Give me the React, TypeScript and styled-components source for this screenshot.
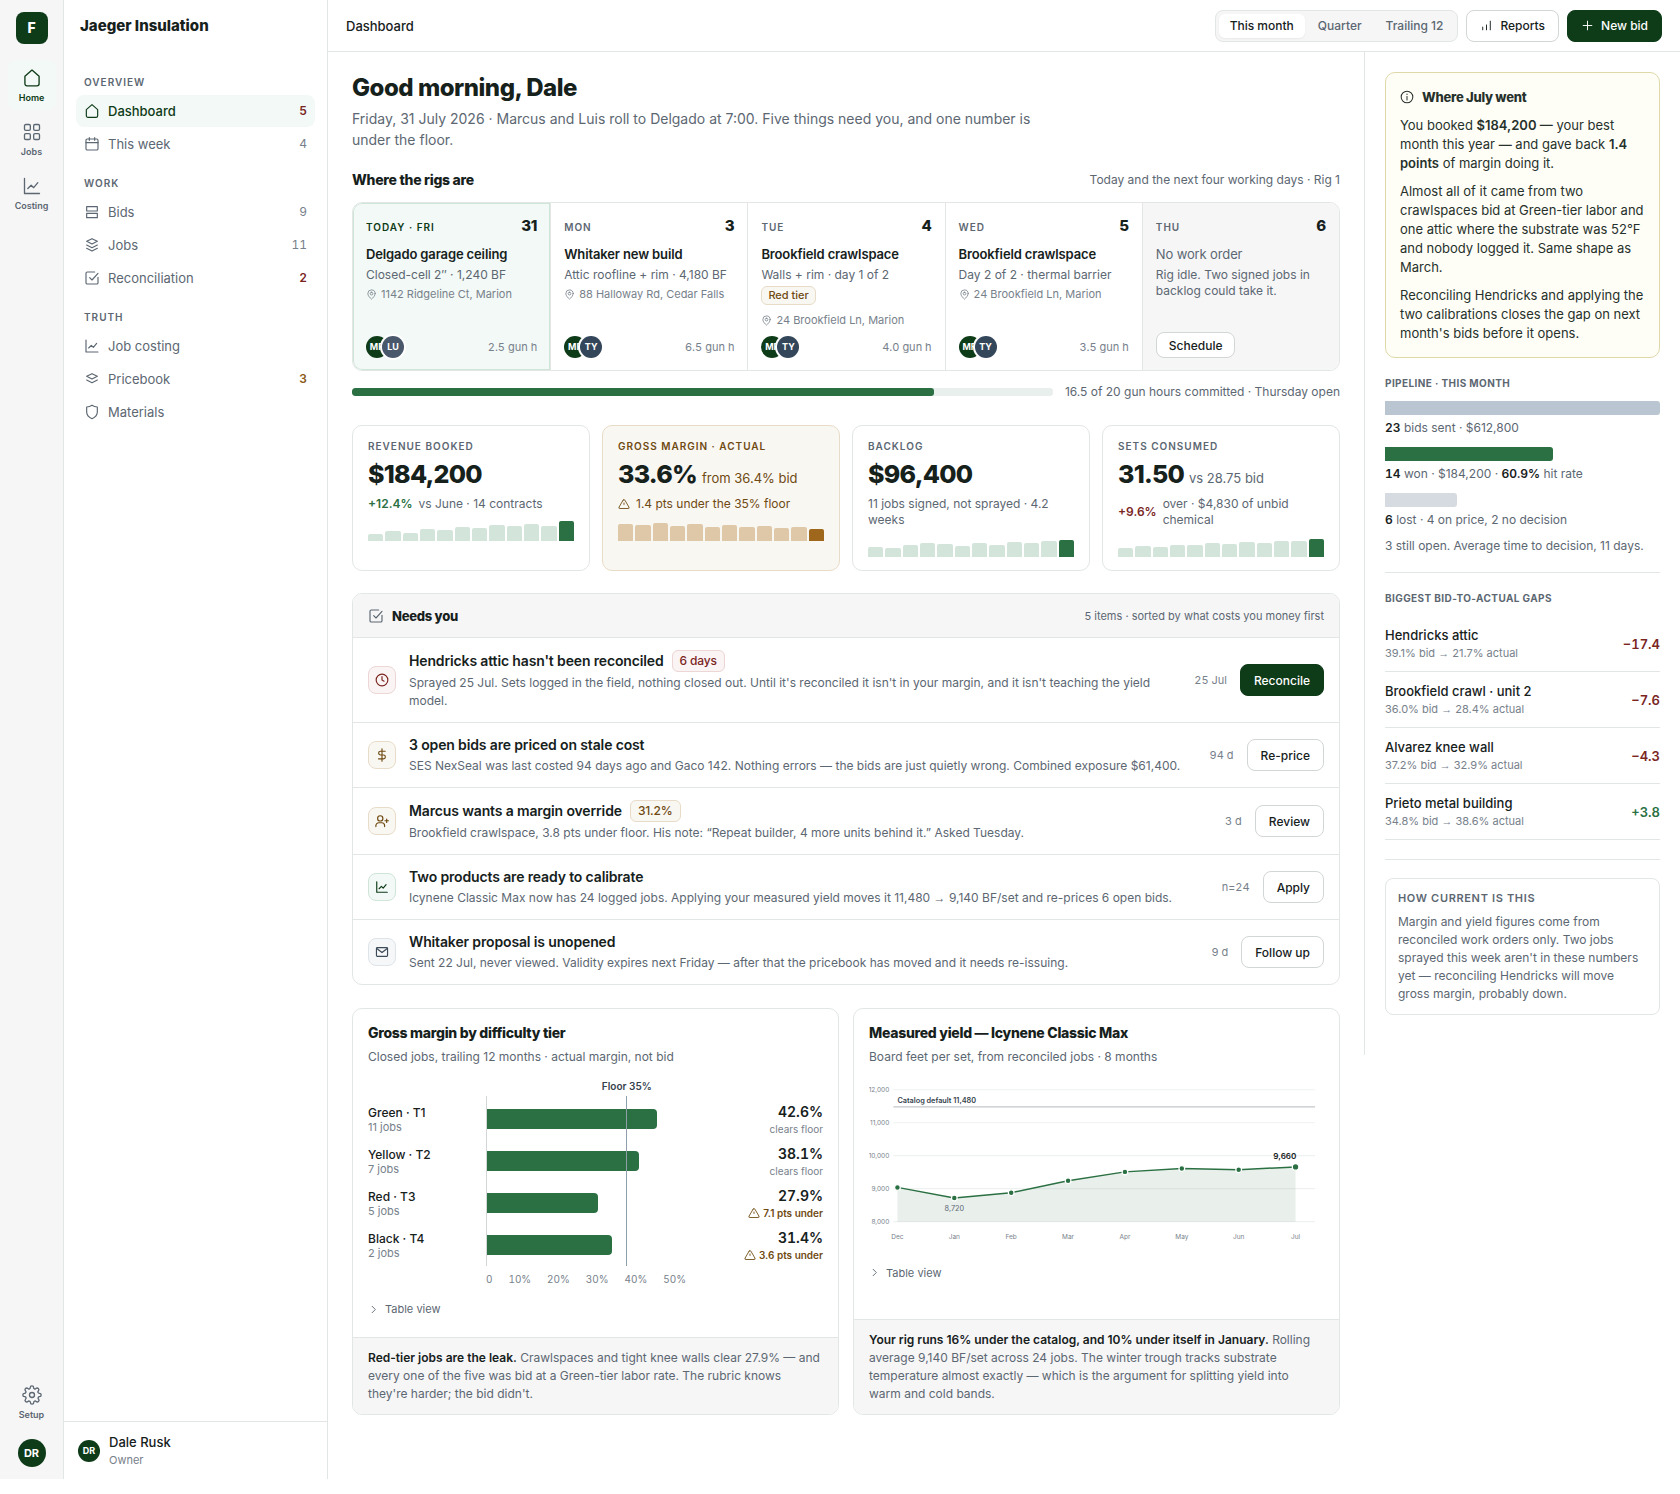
import React, { useState } from "react";
import styled, { createGlobalStyle, css } from "styled-components";

const c = {
  ink: "#16211c",
  text: "#5c6772",
  faint: "#77818b",
  line: "#e2e6e5",
  strong: "#d2d6d6",
  wash: "#f6f6f7",
  brand: "#0e3b18",
  green: "#2a7042",
  greenWash: "#f3f9f6",
  greenLine: "#cfe5d8",
  greenSoft: "#d3e5db",
  amber: "#6f4a12",
  amberWash: "#f9f7f2",
  amberLine: "#e8dcc8",
  red: "#7a261f",
  redWash: "#faf4f4",
  redLine: "#ecd6d6",
};

const Global = createGlobalStyle`
  *, *::before, *::after { box-sizing: border-box; }
  body {
    margin: 0;
    background: #fff;
    color: ${c.ink};
    font-family: Inter, "Liberation Sans", sans-serif;
    font-size: 13px;
    line-height: 20px;
  }
  h1, h2, h3, p, ul, ol { margin: 0; padding: 0; }
  ul, ol { list-style: none; }
  a { color: inherit; text-decoration: none; }
  button { font-family: inherit; cursor: pointer; }
`;

/* ---------- icons ---------- */

const paths = {
  home: ["M3.5 10 12 2.5 20.5 10V19a2.5 2.5 0 0 1-2.5 2.5H6A2.5 2.5 0 0 1 3.5 19z"],
  grid: [
    "M4.5 3h4A1.5 1.5 0 0 1 10 4.5v4A1.5 1.5 0 0 1 8.5 10h-4A1.5 1.5 0 0 1 3 8.5v-4A1.5 1.5 0 0 1 4.5 3z",
    "M15.5 3h4A1.5 1.5 0 0 1 21 4.5v4a1.5 1.5 0 0 1-1.5 1.5h-4A1.5 1.5 0 0 1 14 8.5v-4A1.5 1.5 0 0 1 15.5 3z",
    "M4.5 14h4a1.5 1.5 0 0 1 1.5 1.5v4A1.5 1.5 0 0 1 8.5 21h-4A1.5 1.5 0 0 1 3 19.5v-4A1.5 1.5 0 0 1 4.5 14z",
    "M15.5 14h4a1.5 1.5 0 0 1 1.5 1.5v4a1.5 1.5 0 0 1-1.5 1.5h-4a1.5 1.5 0 0 1-1.5-1.5v-4a1.5 1.5 0 0 1 1.5-1.5z",
  ],
  chart: ["M3 3v18h18", "m7 15 4-4 3 3 5-6"],
  calendar: ["M5 4.5h14a2 2 0 0 1 2 2V19a2 2 0 0 1-2 2H5a2 2 0 0 1-2-2V6.5a2 2 0 0 1 2-2z", "M3 10h18", "M8 2.5v4", "M16 2.5v4"],
  rows: ["M4 4h16v6.5H4z", "M4 14h16v6.5H4z"],
  layers: ["m12 2.5 8 4-8 4-8-4z", "m4 12 8 4 8-4", "m4 17 8 4 8-4"],
  book: ["m12 4 8 4-8 4-8-4z", "m4 13.5 8 4 8-4"],
  check: ["M21 11v8a2 2 0 0 1-2 2H5a2 2 0 0 1-2-2V5a2 2 0 0 1 2-2h11", "m8.5 11.5 3.5 3.5L21 5"],
  shield: ["M12 2c2.5 1.8 5 2.5 8 2.5V12c0 5-3.5 8-8 10-4.5-2-8-5-8-10V4.5C7 4.5 9.5 3.8 12 2z"],
  bars: ["M5 20v-5", "M12 20v-9", "M19 20V4"],
  plus: ["M12 4v16", "M4 12h16"],
  info: ["M12 2a10 10 0 1 0 0 20 10 10 0 0 0 0-20z", "M12 11v6", "M12 7v.5"],
  pin: ["M20 10c0 5-5 9.5-8 12-3-2.5-8-7-8-12a8 8 0 0 1 16 0z", "M12 7a3 3 0 1 0 0 6 3 3 0 0 0 0-6z"],
  warn: ["M10.3 4.2 2.2 18a2 2 0 0 0 1.7 3h16.2a2 2 0 0 0 1.7-3L13.7 4.2a2 2 0 0 0-3.4 0z", "M12 10v3"],
  clock: ["M12 2a10 10 0 1 0 0 20 10 10 0 0 0 0-20z", "M12 6v6l3.5 2"],
  dollar: ["M12 1.5v21", "M17.5 5.5H9.5a3.25 3.25 0 0 0 0 6.5h5a3.25 3.25 0 0 1 0 6.5H6"],
  user: ["M9 3a4.5 4.5 0 1 0 0 9 4.5 4.5 0 0 0 0-9z", "M1.5 21.5v-1.5a5 5 0 0 1 5-5h5a5 5 0 0 1 5 5v1.5", "M20 8.5v6", "M17 11.5h6"],
  mail: ["M4 4.5h16a1.5 1.5 0 0 1 1.5 1.5v12a1.5 1.5 0 0 1-1.5 1.5H4A1.5 1.5 0 0 1 2.5 18V6A1.5 1.5 0 0 1 4 4.5z", "m3 6 9 7 9-7"],
  chevron: ["m9 5 7 7-7 7"],
  gear: [
    "M19.4 15a1.65 1.65 0 0 0 .33 1.82l.06.06a2 2 0 0 1-2.83 2.83l-.06-.06a1.65 1.65 0 0 0-2.8 1.18V21a2 2 0 0 1-4 0v-.09A1.65 1.65 0 0 0 9 19.4a1.65 1.65 0 0 0-1.82.33l-.06.06a2 2 0 0 1-2.83-2.83l.06-.06A1.65 1.65 0 0 0 3.09 14H3a2 2 0 0 1 0-4h.09A1.65 1.65 0 0 0 4.6 9a1.65 1.65 0 0 0-.33-1.82l-.06-.06a2 2 0 0 1 2.83-2.83l.06.06A1.65 1.65 0 0 0 9.9 3.09V3a2 2 0 0 1 4 0v.09a1.65 1.65 0 0 0 2.8 1.26l.06-.06a2 2 0 0 1 2.83 2.83l-.06.06A1.65 1.65 0 0 0 20.91 10H21a2 2 0 0 1 0 4h-.09a1.65 1.65 0 0 0-1.51 1z",
    "M12 9a3 3 0 1 0 0 6 3 3 0 0 0 0-6z",
  ],
};
type IconName = keyof typeof paths;

const Svg = styled.svg`
  flex: none;
  display: block;
  fill: none;
  stroke: currentColor;
  stroke-linecap: round;
  stroke-linejoin: round;
`;

function Icon({ name, size = 16, weight = 1.75 }: { name: IconName; size?: number; weight?: number }) {
  return (
    <Svg width={size} height={size} viewBox="0 0 24 24" strokeWidth={weight} aria-hidden="true">
      {paths[name].map((d) => (
        <path key={d} d={d} />
      ))}
    </Svg>
  );
}

/* ---------- shell ---------- */

const Shell = styled.div`
  display: grid;
  grid-template-columns: 64px 264px minmax(0, 1fr);
`;

const Rail = styled.nav`
  display: flex;
  flex-direction: column;
  align-items: center;
  gap: 4px;
  padding: 12px 0;
  background: ${c.wash};
  border-right: 1px solid ${c.line};
`;

const Logo = styled.a`
  display: grid;
  place-items: center;
  width: 32px;
  height: 32px;
  margin-bottom: 12px;
  border-radius: 8px;
  background: ${c.brand};
  color: #fff;
  font-size: 14px;
  font-weight: 800;
`;

const RailLink = styled.a<{ $active?: boolean }>`
  display: flex;
  flex-direction: column;
  align-items: center;
  gap: 4px;
  width: 48px;
  height: 50px;
  padding-top: 8px;
  border-radius: 8px;
  font-size: 9px;
  font-weight: 600;
  line-height: 12px;
  color: ${(p) => (p.$active ? c.brand : c.text)};
  background: ${(p) => (p.$active ? c.greenWash : "transparent")};
`;

const RailFoot = styled.div`
  display: flex;
  flex-direction: column;
  align-items: center;
  gap: 12px;
  margin-top: auto;
`;

const Avatar = styled.span<{ $size: number; $color?: string; $ring?: boolean }>`
  flex: none;
  display: grid;
  place-items: center;
  width: ${(p) => p.$size}px;
  height: ${(p) => p.$size}px;
  border-radius: 50%;
  background: ${(p) => p.$color ?? c.brand};
  color: #fff;
  font-size: ${(p) => (p.$size > 24 ? 11 : 9)}px;
  font-weight: 700;
  line-height: 12px;
  box-shadow: ${(p) => (p.$ring ? "0 0 0 2px #fff" : "none")};
`;

const Sidebar = styled.div`
  display: flex;
  flex-direction: column;
  border-right: 1px solid ${c.line};
`;

const Company = styled.div`
  padding: 16px;
  font-size: 15px;
  font-weight: 800;
  line-height: 20px;
`;

const Groups = styled.nav`
  display: grid;
  gap: 15px;
  padding: 22px 12px;
`;

const GroupLabel = styled.h2`
  padding-left: 8px;
  margin-bottom: 5px;
  font-size: 10px;
  font-weight: 600;
  line-height: 16px;
  letter-spacing: 1px;
  color: ${c.text};
`;

const NavList = styled.ul`
  display: grid;
  gap: 1px;
`;

const NavLink = styled.a<{ $active?: boolean }>`
  display: flex;
  align-items: center;
  gap: 8px;
  height: 32px;
  padding: 0 8px;
  border-radius: 8px;
  font-size: 13px;
  font-weight: ${(p) => (p.$active ? 500 : 400)};
  color: ${(p) => (p.$active ? c.brand : c.text)};
  background: ${(p) => (p.$active ? c.greenWash : "transparent")};
`;

const Count = styled.span<{ $tone?: string }>`
  margin-left: auto;
  font-size: 12px;
  font-weight: ${(p) => (p.$tone ? 600 : 400)};
  font-variant-numeric: tabular-nums;
  color: ${(p) => p.$tone ?? c.faint};
`;

const Account = styled.div`
  display: flex;
  align-items: center;
  gap: 9px;
  height: 58px;
  margin-top: auto;
  padding: 0 14px;
  border-top: 1px solid ${c.line};
  font-weight: 500;
  line-height: 18px;
`;

const Muted = styled.div`
  font-size: 11px;
  font-weight: 400;
  line-height: 18px;
  color: ${c.faint};
`;

const Page = styled.div`
  min-width: 0;
`;

const Topbar = styled.header`
  display: flex;
  align-items: center;
  gap: 8px;
  height: 52px;
  padding: 0 18px;
  border-bottom: 1px solid ${c.line};
`;

const Crumb = styled.div`
  margin-right: auto;
  font-weight: 500;
`;

const Tabs = styled.div`
  display: flex;
  gap: 2px;
  padding: 3px;
  border: 1px solid ${c.line};
  border-radius: 8px;
  background: ${c.wash};
`;

const Tab = styled.button<{ $active?: boolean }>`
  height: 24px;
  padding: 0 11px;
  border: 0;
  border-radius: 6px;
  font-size: 12px;
  font-weight: 500;
  color: ${(p) => (p.$active ? c.ink : c.text)};
  background: ${(p) => (p.$active ? "#fff" : "transparent")};
  box-shadow: ${(p) => (p.$active ? "0 1px 2px rgba(20, 30, 25, 0.06)" : "none")};
`;

const Button = styled.button<{ $primary?: boolean; $small?: boolean }>`
  flex: none;
  display: inline-flex;
  align-items: center;
  gap: 7px;
  height: ${(p) => (p.$small ? 26 : 32)}px;
  padding: 0 ${(p) => (p.$small ? 12 : 13)}px;
  border: 1px solid ${(p) => (p.$primary ? c.brand : c.strong)};
  border-radius: 8px;
  font-size: 12px;
  font-weight: 500;
  white-space: nowrap;
  color: ${(p) => (p.$primary ? "#fff" : c.ink)};
  background: ${(p) => (p.$primary ? c.brand : "#fff")};
`;

const Columns = styled.div`
  display: grid;
  grid-template-columns: minmax(0, 1fr) 316px;
  align-items: start;
`;

const Main = styled.main`
  padding: 20px 24px 64px;
`;

const Greeting = styled.h1`
  font-size: 24px;
  font-weight: 800;
  line-height: 32px;
  letter-spacing: -0.02em;
`;

const Lede = styled.p`
  max-width: 690px;
  margin: 4px 0 20px;
  font-size: 14px;
  line-height: 21px;
  color: ${c.text};
`;

const SectionHead = styled.div`
  display: flex;
  align-items: center;
  justify-content: space-between;
  margin-bottom: 12px;
`;

const Heading = styled.h2<{ $small?: boolean }>`
  font-size: ${(p) => (p.$small ? 13 : 14)}px;
  font-weight: 800;
  line-height: 20px;
  letter-spacing: -0.02em;
`;

const Note = styled.span<{ $small?: boolean }>`
  font-size: ${(p) => (p.$small ? 11 : 12)}px;
  line-height: 18px;
  color: ${c.text};
`;

/* ---------- week ---------- */

const Week = styled.ol`
  display: grid;
  grid-template-columns: repeat(5, minmax(0, 1fr));
  min-height: 169px;
  border: 1px solid ${c.line};
  border-radius: 10px;
  overflow: hidden;
`;

const Day = styled.li<{ $today?: boolean; $idle?: boolean }>`
  display: flex;
  flex-direction: column;
  padding: 13px 13px 12px;
  background: ${(p) => (p.$today ? c.greenWash : p.$idle ? c.wash : "#fff")};
  & + & {
    border-left: 1px solid ${c.line};
  }
  ${(p) =>
    p.$today &&
    css`
      box-shadow: inset 0 0 0 1px ${c.greenLine};
      border-radius: 9px 0 0 9px;
    `}
`;

const DayHead = styled.div`
  display: flex;
  align-items: baseline;
  justify-content: space-between;
  margin-bottom: 7px;
`;

const DayName = styled.span<{ $today?: boolean }>`
  font-size: 10px;
  font-weight: 600;
  line-height: 20px;
  letter-spacing: 1px;
  color: ${(p) => (p.$today ? c.brand : c.text)};
`;

const DayNumber = styled.span`
  font-size: 15px;
  font-weight: 800;
  line-height: 20px;
  letter-spacing: -0.02em;
`;

const JobTitle = styled.div<{ $muted?: boolean }>`
  font-size: 13px;
  font-weight: ${(p) => (p.$muted ? 400 : 600)};
  color: ${(p) => (p.$muted ? c.text : c.ink)};
  line-height: 20px;
  letter-spacing: -0.01em;
  white-space: nowrap;
`;

const JobLine = styled.div<{ $faint?: boolean }>`
  display: flex;
  align-items: center;
  gap: 4px;
  margin-top: 3px;
  font-size: ${(p) => (p.$faint ? 11 : 12)}px;
  line-height: 16px;
  color: ${(p) => (p.$faint ? c.faint : c.text)};
`;

const tones = {
  red: [c.red, c.redWash, c.redLine],
  amber: [c.amber, c.amberWash, c.amberLine],
  green: [c.brand, c.greenWash, c.greenLine],
  slate: ["#3d4a57", "#f5f7f9", "#dfe4e8"],
} as const;
type Tone = keyof typeof tones;

const Badge = styled.span<{ $tone: Tone; $small?: boolean }>`
  display: inline-block;
  padding: ${(p) => (p.$small ? "0 6px" : "1px 7px")};
  border: 1px solid ${(p) => tones[p.$tone][2]};
  border-radius: 6px;
  font-size: ${(p) => (p.$small ? 11 : 12)}px;
  font-weight: 500;
  line-height: ${(p) => (p.$small ? 17 : 18)}px;
  color: ${(p) => tones[p.$tone][0]};
  background: ${(p) => tones[p.$tone][1]};
`;

const BadgeLine = styled.div`
  display: flex;
  margin: 3px 0 4px;
`;

const DayFoot = styled.div`
  display: flex;
  align-items: center;
  justify-content: space-between;
  margin-top: auto;
`;

const Crew = styled.div`
  display: flex;
  & > * + * {
    margin-left: -6px;
  }
`;

const Hours = styled.span`
  font-size: 11px;
  line-height: 16px;
  font-variant-numeric: tabular-nums;
  color: ${c.faint};
`;

const Capacity = styled.div`
  display: flex;
  align-items: center;
  gap: 12px;
  margin: 12px 0 24px;
`;

const Meter = styled.div`
  flex: 1;
  height: 8px;
  border-radius: 3px;
  background: #e9efec;
  overflow: hidden;
`;

const MeterFill = styled.div`
  height: 100%;
  border-radius: 3px;
  background: ${c.green};
`;

/* ---------- stats ---------- */

const Stats = styled.div`
  display: grid;
  grid-template-columns: repeat(4, minmax(0, 1fr));
  gap: 12px;
  margin-bottom: 22px;
`;

const Stat = styled.section<{ $warn?: boolean }>`
  padding: 13px 15px;
  border: 1px solid ${(p) => (p.$warn ? c.amberLine : c.line)};
  border-radius: 10px;
  background: ${(p) => (p.$warn ? c.amberWash : "#fff")};
  color: ${(p) => (p.$warn ? c.amber : c.text)};
`;

const StatLabel = styled.h3`
  font-size: 10px;
  font-weight: 600;
  line-height: 14px;
  letter-spacing: 1px;
`;

const StatValue = styled.div`
  display: flex;
  align-items: baseline;
  gap: 5px;
  height: 30px;
  margin-top: 6px;
  font-size: 13px;
  line-height: 20px;
  white-space: nowrap;
`;

const Big = styled.strong`
  font-size: 25px;
  font-weight: 800;
  line-height: 30px;
  letter-spacing: -0.03em;
  color: ${c.ink};
`;

const StatSub = styled.div`
  display: flex;
  align-items: center;
  gap: 6px;
  margin-top: 7px;
  font-size: 12px;
  line-height: 16px;
`;

const Delta = styled.b<{ $bad?: boolean }>`
  font-weight: 600;
  color: ${(p) => (p.$bad ? c.red : c.green)};
`;

const Spark = styled.div`
  display: flex;
  align-items: flex-end;
  gap: 2px;
  height: 22px;
  margin-top: 7px;
`;

const SparkBar = styled.span<{ $warn?: boolean }>`
  flex: 1;
  border-radius: 2px 2px 0 0;
  background: ${(p) => (p.$warn ? "#dfc8a8" : c.greenSoft)};
  &:last-child {
    background: ${(p) => (p.$warn ? "#9f671b" : c.green)};
  }
`;

function Sparkline({ values, warn }: { values: number[]; warn?: boolean }) {
  return (
    <Spark aria-hidden="true">
      {values.map((v, i) => (
        <SparkBar key={i} $warn={warn} style={{ height: v }} />
      ))}
    </Spark>
  );
}

/* ---------- queue ---------- */

const Panel = styled.section`
  display: flex;
  flex-direction: column;
  border: 1px solid ${c.line};
  border-radius: 10px;
  overflow: hidden;
`;

const PanelHead = styled.header`
  display: flex;
  align-items: center;
  justify-content: space-between;
  height: 44px;
  padding: 0 15px;
  border-bottom: 1px solid ${c.line};
  background: ${c.wash};
`;

const IconHeading = styled.div`
  display: flex;
  align-items: center;
  gap: 8px;
  color: ${c.text};
  h2 {
    color: ${c.ink};
  }
`;

const Task = styled.li`
  display: flex;
  align-items: center;
  gap: 13px;
  padding: 12px 15px;
  & + & {
    border-top: 1px solid ${c.line};
  }
`;

const Tile = styled.span<{ $tone: Tone }>`
  flex: none;
  display: grid;
  place-items: center;
  width: 28px;
  height: 28px;
  border: 1px solid ${(p) => tones[p.$tone][2]};
  border-radius: 8px;
  color: ${(p) => tones[p.$tone][0]};
  background: ${(p) => tones[p.$tone][1]};
`;

const TaskBody = styled.div`
  flex: 1;
  min-width: 0;
`;

const TaskTitle = styled.h3`
  display: flex;
  align-items: center;
  gap: 8px;
  font-size: 14px;
  font-weight: 600;
  line-height: 20px;
  letter-spacing: -0.01em;
`;

const TaskText = styled.p`
  max-width: 780px;
  margin-top: 2px;
  font-size: 12px;
  line-height: 18px;
  color: ${c.text};
`;

const ArrowGlyph = styled.span`
  font-family: "Liberation Sans", sans-serif;
`;

/* ---------- charts ---------- */

const Charts = styled.div`
  display: grid;
  grid-template-columns: repeat(2, minmax(0, 1fr));
  gap: 14px;
  margin-top: 23px;
`;

const ChartBody = styled.div`
  padding: 14px 15px 19px;
`;

const ChartSub = styled.p`
  margin-top: 5px;
  font-size: 12px;
  line-height: 18px;
  color: ${c.text};
`;

const Tiers = styled.div`
  display: grid;
  grid-template-columns: 118px minmax(0, 200px) minmax(0, 1fr);
  margin-top: 30px;
`;

const TierColumn = styled.div`
  padding-top: 2px;
`;

const TierCell = styled.div<{ $right?: boolean }>`
  display: flex;
  flex-direction: column;
  justify-content: center;
  height: 42px;
  align-items: ${(p) => (p.$right ? "flex-end" : "flex-start")};
`;

const TierName = styled.span`
  font-size: 12px;
  font-weight: 500;
  line-height: 15px;
`;

const TierJobs = styled.span`
  font-size: 11px;
  line-height: 14px;
  color: ${c.faint};
`;

const TierValue = styled.span`
  padding-top: 2px;
  font-size: 14px;
  font-weight: 600;
  line-height: 18px;
  font-variant-numeric: tabular-nums;
`;

const TierNote = styled.span<{ $warn?: boolean }>`
  display: flex;
  align-items: center;
  gap: 3px;
  font-size: 10px;
  font-weight: ${(p) => (p.$warn ? 600 : 400)};
  line-height: 16px;
  color: ${(p) => (p.$warn ? c.amber : c.faint)};
`;

const Plot = styled(TierColumn)`
  position: relative;
  border-left: 1px solid ${c.strong};
`;

const TierBar = styled.div`
  height: 20px;
  border-radius: 0 4px 4px 0;
  background: ${c.green};
`;

const Floor = styled.div`
  position: absolute;
  top: 0;
  bottom: 0;
  left: 70%;
  width: 1px;
  background: #8fa0ab;
`;

const FloorLabel = styled.span`
  position: absolute;
  bottom: 100%;
  left: 50%;
  transform: translateX(-50%);
  margin-bottom: 3px;
  font-size: 10px;
  font-weight: 600;
  line-height: 14px;
  white-space: nowrap;
  color: #35424d;
`;

const Axis = styled.div`
  grid-column: 2;
  display: flex;
  justify-content: space-between;
  margin-top: 6px;
  font-size: 10px;
  line-height: 14px;
  font-variant-numeric: tabular-nums;
  color: ${c.faint};
`;

const Details = styled.details<{ $gap: number }>`
  margin-top: ${(p) => p.$gap}px;
  font-size: 11px;
  color: ${c.text};
  &[open] > summary > svg {
    transform: rotate(90deg);
  }
`;

const Summary = styled.summary`
  display: flex;
  align-items: center;
  gap: 6px;
  list-style: none;
  line-height: 18px;
  cursor: pointer;
`;

const DataTable = styled.table`
  width: 100%;
  margin-top: 8px;
  border-collapse: collapse;
  text-align: left;
  th,
  td {
    padding: 4px 0;
    border-bottom: 1px solid ${c.line};
  }
`;

const ChartFoot = styled.p`
  margin-top: auto;
  padding: 11px 17px 11px 15px;
  border-top: 1px solid ${c.line};
  background: ${c.wash};
  font-size: 12px;
  line-height: 18px;
  color: ${c.text};
  b {
    font-weight: 600;
    color: ${c.ink};
  }
`;

const YieldSvg = styled.svg`
  display: block;
  width: 100%;
  margin-top: 14px;
  overflow: hidden;
  font-size: 8px;
  fill: ${c.faint};
`;

/* ---------- aside ---------- */

const Aside = styled.aside`
  padding: 20px 20px 40px;
  border-left: 1px solid ${c.line};
`;

const Callout = styled.section`
  display: grid;
  gap: 9px;
  padding: 14px;
  border: 1px solid #dfd8a9;
  border-radius: 10px;
  background: #fffef6;
  font-size: 13px;
  line-height: 19px;
  color: #26312c;
  b {
    font-weight: 600;
  }
`;

const CalloutHead = styled.div`
  display: flex;
  align-items: center;
  gap: 8px;
`;

const SideLabel = styled.h2<{ $spaced?: boolean }>`
  font-size: ${(p) => (p.$spaced ? 11 : 10)}px;
  font-weight: ${(p) => (p.$spaced ? 600 : 700)};
  line-height: 16px;
  letter-spacing: ${(p) => (p.$spaced ? "0.06em" : "0.04em")};
  color: ${c.text};
`;

const Pipeline = styled.section`
  padding: 17px 0 17px;
  border-bottom: 1px solid ${c.line};
`;

const Stage = styled.div`
  margin-top: 10px;
  font-size: 12px;
  line-height: 18px;
  color: ${c.text};
  b {
    font-weight: 600;
    color: ${c.ink};
    font-variant-numeric: tabular-nums;
  }
`;

const StageNote = styled.p`
  margin-top: 8px;
  font-size: 12px;
  line-height: 18px;
  color: ${c.text};
`;

const StageBar = styled.div<{ $color: string }>`
  height: 14px;
  margin-bottom: 4px;
  border-radius: 0 3px 3px 0;
  background: ${(p) => p.$color};
`;

const Gaps = styled.section`
  padding: 17px 0 19px;
  border-bottom: 1px solid ${c.line};
  ul {
    margin-top: 10px;
  }
`;

const Gap = styled.li`
  display: flex;
  align-items: center;
  justify-content: space-between;
  height: 56px;
  border-bottom: 1px solid ${c.line};
`;

const GapName = styled.div`
  font-size: 13px;
  font-weight: 500;
  line-height: 19px;
`;

const GapText = styled.div`
  font-size: 11px;
  line-height: 17px;
  color: ${c.faint};
`;

const GapValue = styled.b<{ $good?: boolean }>`
  font-size: 13px;
  font-weight: 600;
  font-variant-numeric: tabular-nums;
  color: ${(p) => (p.$good ? c.green : c.red)};
`;

const Freshness = styled.section`
  margin-top: 18px;
  padding: 11px 12px;
  border: 1px solid ${c.line};
  border-radius: 8px;
  p {
    margin-top: 7px;
    font-size: 12px;
    line-height: 18px;
    color: ${c.text};
  }
`;

/* ---------- data ---------- */

type Item = { icon: IconName; label: string; count?: number; tone?: string; active?: boolean };
const groups: { label: string; items: Item[] }[] = [
  {
    label: "OVERVIEW",
    items: [
      { icon: "home", label: "Dashboard", count: 5, tone: c.red, active: true },
      { icon: "calendar", label: "This week", count: 4 },
    ],
  },
  {
    label: "WORK",
    items: [
      { icon: "rows", label: "Bids", count: 9 },
      { icon: "layers", label: "Jobs", count: 11 },
      { icon: "check", label: "Reconciliation", count: 2, tone: c.red },
    ],
  },
  {
    label: "TRUTH",
    items: [
      { icon: "chart", label: "Job costing" },
      { icon: "book", label: "Pricebook", count: 3, tone: "#8a5a18" },
      { icon: "shield", label: "Materials" },
    ],
  },
];

const days = [
  { day: "TODAY · FRI", n: 31, job: "Delgado garage ceiling", what: "Closed-cell 2″ · 1,240 BF", where: "1142 Ridgeline Ct, Marion", mate: "LU", hours: "2.5", today: true },
  { day: "MON", n: 3, job: "Whitaker new build", what: "Attic roofline + rim · 4,180 BF", where: "88 Halloway Rd, Cedar Falls", mate: "TY", hours: "6.5" },
  { day: "TUE", n: 4, job: "Brookfield crawlspace", what: "Walls + rim · day 1 of 2", tier: "Red tier", where: "24 Brookfield Ln, Marion", mate: "TY", hours: "4.0" },
  { day: "WED", n: 5, job: "Brookfield crawlspace", what: "Day 2 of 2 · thermal barrier", where: "24 Brookfield Ln, Marion", mate: "TY", hours: "3.5" },
];

type TaskData = { icon: IconName; tone: Tone; title: string; badge?: string; text: React.ReactNode; when: string; action: string; primary?: boolean };
const tasks: TaskData[] = [
  { icon: "clock", tone: "red", title: "Hendricks attic hasn't been reconciled", badge: "6 days", text: "Sprayed 25 Jul. Sets logged in the field, nothing closed out. Until it's reconciled it isn't in your margin, and it isn't teaching the yield model.", when: "25 Jul", action: "Reconcile", primary: true },
  { icon: "dollar", tone: "amber", title: "3 open bids are priced on stale cost", text: "SES NexSeal was last costed 94 days ago and Gaco 142. Nothing errors — the bids are just quietly wrong. Combined exposure $61,400.", when: "94 d", action: "Re-price" },
  { icon: "user", tone: "amber", title: "Marcus wants a margin override", badge: "31.2%", text: "Brookfield crawlspace, 3.8 pts under floor. His note: “Repeat builder, 4 more units behind it.” Asked Tuesday.", when: "3 d", action: "Review" },
  { icon: "chart", tone: "green", title: "Two products are ready to calibrate", text: <>Icynene Classic Max now has 24 logged jobs. Applying your measured yield moves it 11,480 <ArrowGlyph>→</ArrowGlyph> 9,140 BF/set and re-prices 6 open bids.</>, when: "n=24", action: "Apply" },
  { icon: "mail", tone: "slate", title: "Whitaker proposal is unopened", text: "Sent 22 Jul, never viewed. Validity expires next Friday — after that the pricebook has moved and it needs re-issuing.", when: "9 d", action: "Follow up" },
];

const tiers = [
  { name: "Green · T1", jobs: 11, margin: 42.6 },
  { name: "Yellow · T2", jobs: 7, margin: 38.1 },
  { name: "Red · T3", jobs: 5, margin: 27.9 },
  { name: "Black · T4", jobs: 2, margin: 31.4 },
];
const FLOOR = 35;

const yields: [string, number][] = [
  ["Dec", 9040], ["Jan", 8720], ["Feb", 8880], ["Mar", 9240],
  ["Apr", 9510], ["May", 9615], ["Jun", 9575], ["Jul", 9660],
];

const gaps = [
  { name: "Hendricks attic", bid: "39.1", actual: "21.7", gap: "−17.4" },
  { name: "Brookfield crawl · unit 2", bid: "36.0", actual: "28.4", gap: "−7.6" },
  { name: "Alvarez knee wall", bid: "37.2", actual: "32.9", gap: "−4.3" },
  { name: "Prieto metal building", bid: "34.8", actual: "38.6", gap: "+3.8", good: true },
];

/* ---------- chart pieces ---------- */

function TableView({ gap, head, rows }: { gap: number; head: string[]; rows: (string | number)[][] }) {
  const [open, setOpen] = useState(false);
  return (
    <Details $gap={gap} onToggle={(e) => setOpen(e.currentTarget.open)}>
      <Summary>
        <Icon name="chevron" size={11} weight={2} />
        Table view
      </Summary>
      {open && (
        <DataTable>
          <thead>
            <tr>{head.map((h) => <th key={h}>{h}</th>)}</tr>
          </thead>
          <tbody>
            {rows.map((r) => (
              <tr key={r[0]}>{r.map((v, i) => <td key={i}>{v}</td>)}</tr>
            ))}
          </tbody>
        </DataTable>
      )}
    </Details>
  );
}

function YieldChart() {
  const y = (v: number) => 12 + (12000 - v) * 0.0406;
  const x = (i: number) => 35 + i * 70;
  const line = yields.map(([, v], i) => `${x(i)},${y(v)}`).join(" ");
  return (
    <YieldSvg viewBox="0 0 560 200" role="img" aria-label="Measured yield per month">
      {[12000, 11000, 10000, 9000, 8000].map((v) => (
        <g key={v}>
          <line x1="30" x2="549" y1={y(v)} y2={y(v)} stroke="#eff1f1" strokeWidth="1.5" />
          <text x="25" y={y(v) + 3} textAnchor="end">{v.toLocaleString("en-US")}</text>
        </g>
      ))}
      <polygon points={`${x(0)},${y(8000)} ${line} ${x(7)},${y(8000)}`} fill={c.green} fillOpacity="0.1" />
      <line x1="30" x2="549" y1={y(11480)} y2={y(11480)} stroke="#c3c7ca" strokeWidth="1.5" />
      <text x="35" y={y(11480) - 5} fontSize="9" fontWeight="600" fill="#35424d">Catalog default 11,480</text>
      <polyline points={line} fill="none" stroke={c.green} strokeWidth="1.8" strokeLinejoin="round" />
      {yields.map(([m, v], i) => (
        <g key={m}>
          <circle cx={x(i)} cy={y(v)} r={i === 7 ? 4 : 3.5} fill={c.green} stroke="#fff" strokeWidth="1.5" />
          <text x={x(i)} y="196" textAnchor="middle">{m}</text>
        </g>
      ))}
      <text x={x(1)} y="161" textAnchor="middle" fontSize="9" fill={c.text}>8,720</text>
      <text x={x(7) + 1} y="97" textAnchor="end" fontSize="10" fontWeight="600" fill={c.ink}>9,660</text>
    </YieldSvg>
  );
}

/* ---------- app ---------- */

export default function App() {
  return (
    <>
      <Global />
      <Shell>
        <Rail aria-label="Areas">
          <Logo href="#">F</Logo>
          <RailLink href="#" $active><Icon name="home" size={20} weight={1.6} />Home</RailLink>
          <RailLink href="#"><Icon name="grid" size={20} weight={1.6} />Jobs</RailLink>
          <RailLink href="#"><Icon name="chart" size={20} weight={1.6} />Costing</RailLink>
          <RailFoot>
            <RailLink href="#"><Icon name="gear" size={20} weight={1.6} />Setup</RailLink>
            <Avatar $size={28}>DR</Avatar>
          </RailFoot>
        </Rail>

        <Sidebar>
          <Company>Jaeger Insulation</Company>
          <Groups aria-label="Sections">
            {groups.map((g) => (
              <section key={g.label}>
                <GroupLabel>{g.label}</GroupLabel>
                <NavList>
                  {g.items.map((it) => (
                    <li key={it.label}>
                      <NavLink href="#" $active={it.active}>
                        <Icon name={it.icon} />
                        {it.label}
                        {it.count !== undefined && <Count $tone={it.tone}>{it.count}</Count>}
                      </NavLink>
                    </li>
                  ))}
                </NavList>
              </section>
            ))}
          </Groups>
          <Account>
            <Avatar $size={22}>DR</Avatar>
            <div>
              Dale Rusk
              <Muted>Owner</Muted>
            </div>
          </Account>
        </Sidebar>

        <Page>
          <Topbar>
            <Crumb>Dashboard</Crumb>
            <Tabs>
              <Tab $active>This month</Tab>
              <Tab>Quarter</Tab>
              <Tab>Trailing 12</Tab>
            </Tabs>
            <Button><Icon name="bars" size={13} />Reports</Button>
            <Button $primary><Icon name="plus" size={13} />New bid</Button>
          </Topbar>

          <Columns>
            <Main>
              <Greeting>Good morning, Dale</Greeting>
              <Lede>
                Friday, 31 July 2026 · Marcus and Luis roll to Delgado at 7:00. Five things need you, and one number is under the floor.
              </Lede>

              <SectionHead>
                <Heading>Where the rigs are</Heading>
                <Note>Today and the next four working days · Rig 1</Note>
              </SectionHead>
              <Week>
                {days.map((d) => (
                  <Day key={d.day} $today={d.today}>
                    <DayHead>
                      <DayName $today={d.today}>{d.day}</DayName>
                      <DayNumber>{d.n}</DayNumber>
                    </DayHead>
                    <JobTitle>{d.job}</JobTitle>
                    <JobLine>{d.what}</JobLine>
                    {d.tier && <BadgeLine><Badge $tone="amber" $small>{d.tier}</Badge></BadgeLine>}
                    <JobLine $faint><Icon name="pin" size={11} />{d.where}</JobLine>
                    <DayFoot>
                      <Crew>
                        <Avatar $size={22}>MR</Avatar>
                        <Avatar $size={22} $ring $color={d.mate === "LU" ? "#4a586b" : "#33465a"}>{d.mate}</Avatar>
                      </Crew>
                      <Hours>{d.hours} gun h</Hours>
                    </DayFoot>
                  </Day>
                ))}
                <Day $idle>
                  <DayHead>
                    <DayName>THU</DayName>
                    <DayNumber>6</DayNumber>
                  </DayHead>
                  <JobTitle $muted>No work order</JobTitle>
                  <JobLine>Rig idle. Two signed jobs in backlog could take it.</JobLine>
                  <DayFoot><Button $small>Schedule</Button></DayFoot>
                </Day>
              </Week>
              <Capacity>
                <Meter><MeterFill style={{ width: "83%" }} /></Meter>
                <Note>16.5 of 20 gun hours committed · Thursday open</Note>
              </Capacity>

              <Stats>
                <Stat>
                  <StatLabel>REVENUE BOOKED</StatLabel>
                  <StatValue><Big>$184,200</Big></StatValue>
                  <StatSub><Delta>+12.4%</Delta>vs June · 14 contracts</StatSub>
                  <Sparkline values={[7, 10, 8, 12, 11, 14, 13, 16, 15, 17, 15, 20]} />
                </Stat>
                <Stat $warn>
                  <StatLabel>GROSS MARGIN · ACTUAL</StatLabel>
                  <StatValue><Big>33.6%</Big>from 36.4% bid</StatValue>
                  <StatSub><Icon name="warn" size={12} />1.4 pts under the 35% floor</StatSub>
                  <Sparkline warn values={[17, 16, 18, 15, 17, 14, 16, 14, 15, 13, 14, 12]} />
                </Stat>
                <Stat>
                  <StatLabel>BACKLOG</StatLabel>
                  <StatValue><Big>$96,400</Big></StatValue>
                  <StatSub>11 jobs signed, not sprayed · 4.2 weeks</StatSub>
                  <Sparkline values={[10, 9, 12, 14, 13, 11, 14, 12, 15, 14, 16, 17]} />
                </Stat>
                <Stat>
                  <StatLabel>SETS CONSUMED</StatLabel>
                  <StatValue><Big>31.50</Big>vs 28.75 bid</StatValue>
                  <StatSub><Delta $bad>+9.6%</Delta>over · $4,830 of unbid chemical</StatSub>
                  <Sparkline values={[9, 11, 10, 12, 12, 14, 13, 15, 14, 16, 16, 18]} />
                </Stat>
              </Stats>

              <Panel>
                <PanelHead>
                  <IconHeading><Icon name="check" /><Heading $small>Needs you</Heading></IconHeading>
                  <Note $small>5 items · sorted by what costs you money first</Note>
                </PanelHead>
                <ul>
                  {tasks.map((t) => (
                    <Task key={t.title}>
                      <Tile $tone={t.tone}><Icon name={t.icon} size={14} weight={2} /></Tile>
                      <TaskBody>
                        <TaskTitle>
                          {t.title}
                          {t.badge && <Badge $tone={t.tone}>{t.badge}</Badge>}
                        </TaskTitle>
                        <TaskText>{t.text}</TaskText>
                      </TaskBody>
                      <Hours>{t.when}</Hours>
                      <Button $primary={t.primary}>{t.action}</Button>
                    </Task>
                  ))}
                </ul>
              </Panel>

              <Charts>
                <Panel>
                  <ChartBody>
                    <Heading>Gross margin by difficulty tier</Heading>
                    <ChartSub>Closed jobs, trailing 12 months · actual margin, not bid</ChartSub>
                    <Tiers>
                      <TierColumn>
                        {tiers.map((t) => (
                          <TierCell key={t.name}>
                            <TierName>{t.name}</TierName>
                            <TierJobs>{t.jobs} jobs</TierJobs>
                          </TierCell>
                        ))}
                      </TierColumn>
                      <Plot>
                        {tiers.map((t) => (
                          <TierCell key={t.name}>
                            <TierBar style={{ width: `${t.margin * 2}%` }} />
                          </TierCell>
                        ))}
                        <Floor><FloorLabel>Floor {FLOOR}%</FloorLabel></Floor>
                      </Plot>
                      <TierColumn>
                        {tiers.map((t) => (
                          <TierCell key={t.name} $right>
                            <TierValue>{t.margin}%</TierValue>
                            {t.margin < FLOOR ? (
                              <TierNote $warn><Icon name="warn" size={12} />{(FLOOR - t.margin).toFixed(1)} pts under</TierNote>
                            ) : (
                              <TierNote>clears floor</TierNote>
                            )}
                          </TierCell>
                        ))}
                      </TierColumn>
                      <Axis>
                        {["0", "10%", "20%", "30%", "40%", "50%"].map((a) => <span key={a}>{a}</span>)}
                      </Axis>
                    </Tiers>
                    <TableView gap={14} head={["Tier", "Jobs", "Margin"]} rows={tiers.map((t) => [t.name, t.jobs, `${t.margin}%`])} />
                  </ChartBody>
                  <ChartFoot>
                    <b>Red-tier jobs are the leak.</b> Crawlspaces and tight knee walls clear 27.9% — and every one of the five was bid at a Green-tier labor rate. The rubric knows they're harder; the bid didn't.
                  </ChartFoot>
                </Panel>
                <Panel>
                  <ChartBody>
                    <Heading>Measured yield — Icynene Classic Max</Heading>
                    <ChartSub>Board feet per set, from reconciled jobs · 8 months</ChartSub>
                    <YieldChart />
                    <TableView gap={21} head={["Month", "BF/set"]} rows={yields} />
                  </ChartBody>
                  <ChartFoot>
                    <b>Your rig runs 16% under the catalog, and 10% under itself in January.</b> Rolling average 9,140 BF/set across 24 jobs. The winter trough tracks substrate temperature almost exactly — which is the argument for splitting yield into warm and cold bands.
                  </ChartFoot>
                </Panel>
              </Charts>
            </Main>

            <Aside>
              <Callout>
                <CalloutHead><Icon name="info" size={14} /><Heading $small>Where July went</Heading></CalloutHead>
                <p>You booked <b>$184,200 —</b> your best month this year <b>—</b> and gave back <b>1.4 points</b> of margin doing it.</p>
                <p>Almost all of it came from two crawlspaces bid at Green-tier labor and one attic where the substrate was 52°F and nobody logged it. Same shape as March.</p>
                <p>Reconciling Hendricks and applying the two calibrations closes the gap on next month's bids before it opens.</p>
              </Callout>

              <Pipeline>
                <SideLabel>PIPELINE · THIS MONTH</SideLabel>
                <Stage>
                  <StageBar $color="#b9c5d0" />
                  <b>23</b> bids sent · $612,800
                </Stage>
                <Stage>
                  <StageBar $color={c.green} style={{ width: "61%" }} />
                  <b>14</b> won · $184,200 · <b>60.9%</b> hit rate
                </Stage>
                <Stage>
                  <StageBar $color="#d6dbe1" style={{ width: "26%" }} />
                  <b>6</b> lost · 4 on price, 2 no decision
                </Stage>
                <StageNote>3 still open. Average time to decision, 11 days.</StageNote>
              </Pipeline>

              <Gaps>
                <SideLabel>BIGGEST BID-TO-ACTUAL GAPS</SideLabel>
                <ul>
                  {gaps.map((g) => (
                    <Gap key={g.name}>
                      <div>
                        <GapName>{g.name}</GapName>
                        <GapText>{g.bid}% bid <ArrowGlyph>→</ArrowGlyph> {g.actual}% actual</GapText>
                      </div>
                      <GapValue $good={g.good}>{g.gap}</GapValue>
                    </Gap>
                  ))}
                </ul>
              </Gaps>

              <Freshness>
                <SideLabel $spaced>HOW CURRENT IS THIS</SideLabel>
                <p>
                  Margin and yield figures come from reconciled work orders only. Two jobs sprayed this week aren't in these numbers yet — reconciling Hendricks will move gross margin, probably down.
                </p>
              </Freshness>
            </Aside>
          </Columns>
        </Page>
      </Shell>
    </>
  );
}
